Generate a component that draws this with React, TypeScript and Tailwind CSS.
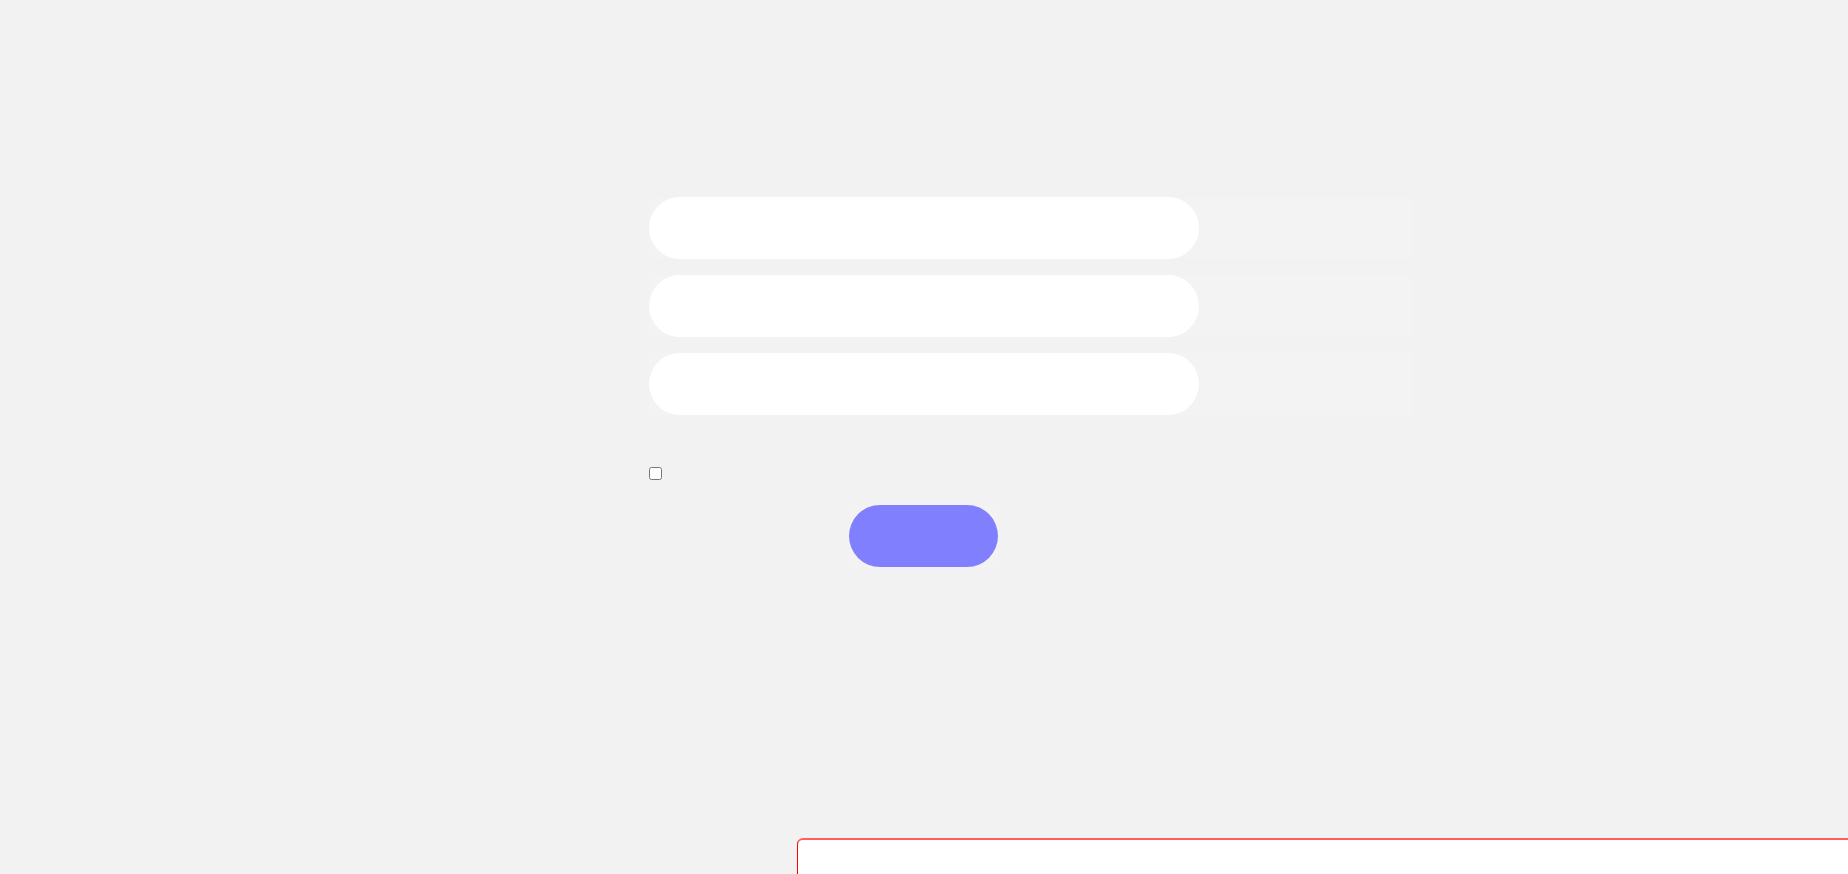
export default function App() {
  const rows = ["email", "password", "confirm"];

  return (
    <div className="relative min-h-screen h-[874px] overflow-hidden bg-[#f2f2f2] font-['Liberation_Sans',sans-serif]">
      <form className="w-[551px] ml-[649px] pt-[197px] flex flex-col">
        {rows.map((name, i) => (
          <div
            key={name}
            className={`w-[764px] h-[62px] bg-[#f3f3f3] ${i > 0 ? "mt-4" : ""}`}
          >
            <div className="w-[550px] h-[62px] rounded-full bg-white" />
          </div>
        ))}

        <div className="mt-[52px] h-[13px] flex items-center">
          <input type="checkbox" className="m-0 w-[13px] h-[13px]" />
        </div>

        <div className="mt-[25px] flex">
          <button
            type="submit"
            className="ml-[200px] w-[149px] h-[62px] bg-[#f3f3f3] p-0"
          >
            <span className="block w-full h-full rounded-full bg-[#8080ff]" />
          </button>
        </div>
      </form>

      <div className="absolute left-[797px] top-[838px] w-[1200px] h-[300px] bg-white rounded-md border-l border-l-[#ff0000] border-t-2 border-t-[#ff5e5e]" />
    </div>
  );
}
